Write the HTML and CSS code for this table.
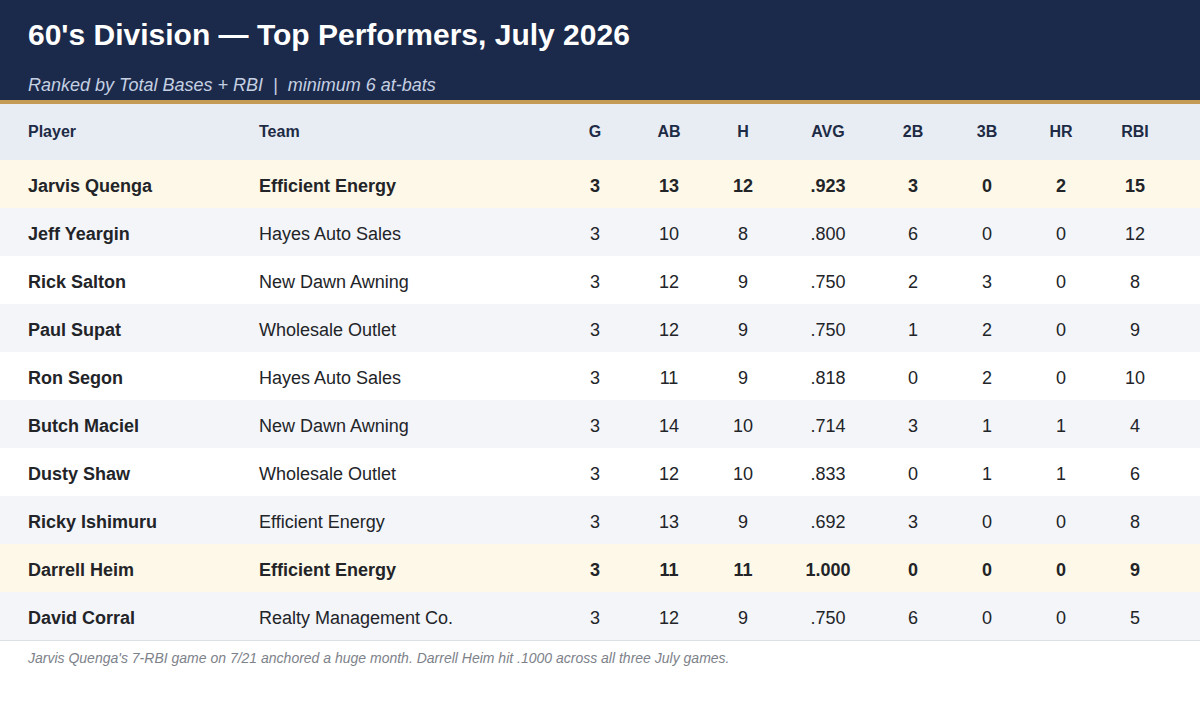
FILE: index.html
```html
<!DOCTYPE html>
<html>
<head>
<meta charset="utf-8">
<link rel="stylesheet" href="styles.css">
</head>
<body>
<header class="banner">
  <h1 class="title">60's Division — Top Performers, July 2026</h1>
  <p class="subtitle">Ranked by Total Bases + RBI &nbsp;|&nbsp; minimum 6 at-bats</p>
</header>
<div class="table">
  <div class="row head">
    <div class="c name">Player</div><div class="c team">Team</div>
    <div class="c num">G</div><div class="c num">AB</div><div class="c num">H</div><div class="c num">AVG</div>
    <div class="c num">2B</div><div class="c num">3B</div><div class="c num">HR</div><div class="c num">RBI</div>
  </div>
  <div class="row hl">
    <div class="c name">Jarvis Quenga</div><div class="c team">Efficient Energy</div>
    <div class="c num">3</div><div class="c num">13</div><div class="c num">12</div><div class="c num">.923</div>
    <div class="c num">3</div><div class="c num">0</div><div class="c num">2</div><div class="c num">15</div>
  </div>
  <div class="row alt">
    <div class="c name">Jeff Yeargin</div><div class="c team">Hayes Auto Sales</div>
    <div class="c num">3</div><div class="c num">10</div><div class="c num">8</div><div class="c num">.800</div>
    <div class="c num">6</div><div class="c num">0</div><div class="c num">0</div><div class="c num">12</div>
  </div>
  <div class="row">
    <div class="c name">Rick Salton</div><div class="c team">New Dawn Awning</div>
    <div class="c num">3</div><div class="c num">12</div><div class="c num">9</div><div class="c num">.750</div>
    <div class="c num">2</div><div class="c num">3</div><div class="c num">0</div><div class="c num">8</div>
  </div>
  <div class="row alt">
    <div class="c name">Paul Supat</div><div class="c team">Wholesale Outlet</div>
    <div class="c num">3</div><div class="c num">12</div><div class="c num">9</div><div class="c num">.750</div>
    <div class="c num">1</div><div class="c num">2</div><div class="c num">0</div><div class="c num">9</div>
  </div>
  <div class="row">
    <div class="c name">Ron Segon</div><div class="c team">Hayes Auto Sales</div>
    <div class="c num">3</div><div class="c num">11</div><div class="c num">9</div><div class="c num">.818</div>
    <div class="c num">0</div><div class="c num">2</div><div class="c num">0</div><div class="c num">10</div>
  </div>
  <div class="row alt">
    <div class="c name">Butch Maciel</div><div class="c team">New Dawn Awning</div>
    <div class="c num">3</div><div class="c num">14</div><div class="c num">10</div><div class="c num">.714</div>
    <div class="c num">3</div><div class="c num">1</div><div class="c num">1</div><div class="c num">4</div>
  </div>
  <div class="row">
    <div class="c name">Dusty Shaw</div><div class="c team">Wholesale Outlet</div>
    <div class="c num">3</div><div class="c num">12</div><div class="c num">10</div><div class="c num">.833</div>
    <div class="c num">0</div><div class="c num">1</div><div class="c num">1</div><div class="c num">6</div>
  </div>
  <div class="row alt">
    <div class="c name">Ricky Ishimuru</div><div class="c team">Efficient Energy</div>
    <div class="c num">3</div><div class="c num">13</div><div class="c num">9</div><div class="c num">.692</div>
    <div class="c num">3</div><div class="c num">0</div><div class="c num">0</div><div class="c num">8</div>
  </div>
  <div class="row hl">
    <div class="c name">Darrell Heim</div><div class="c team">Efficient Energy</div>
    <div class="c num">3</div><div class="c num">11</div><div class="c num">11</div><div class="c num">1.000</div>
    <div class="c num">0</div><div class="c num">0</div><div class="c num">0</div><div class="c num">9</div>
  </div>
  <div class="row alt last">
    <div class="c name">David Corral</div><div class="c team">Realty Management Co.</div>
    <div class="c num">3</div><div class="c num">12</div><div class="c num">9</div><div class="c num">.750</div>
    <div class="c num">6</div><div class="c num">0</div><div class="c num">0</div><div class="c num">5</div>
  </div>
</div>
<p class="note">Jarvis Quenga's 7-RBI game on 7/21 anchored a huge month. Darrell Heim hit .1000 across all three July games.</p>
</body>
</html>
```

FILE: styles.css
```css
* { box-sizing: border-box; }
html, body { margin: 0; padding: 0; }
body {
  width: 1200px;
  height: 708px;
  background: #ffffff;
  font-family: "Liberation Sans", Arial, sans-serif;
  color: #222428;
  overflow: hidden;
}
.banner {
  background: #1b2a4a;
  border-bottom: 4px solid #c49b55;
  padding: 17px 28px 0;
  height: 104px;
}
.title {
  margin: 0;
  font-size: 30px;
  line-height: 36px;
  font-weight: bold;
  color: #ffffff;
}
.subtitle {
  margin: 20px 0 0;
  font-size: 18px;
  line-height: 24px;
  font-style: italic;
  color: #c5d0e3;
}
.table { display: flex; flex-direction: column; }
.row {
  display: grid;
  grid-template-columns: 231px 327px 74px 74px 74px 96px 74px 74px 74px 74px;
  padding: 4px 28px 0 0;
  height: 48px;
  align-items: center;
  font-size: 18px;
  background: #ffffff;
}
.row.alt { background: #f3f5f9; }
.row.hl { background: #fdf8e7; font-weight: bold; }
.row.last { border-bottom: 1px solid #dcdfe4; height: 49px; }
.row.head {
  padding-top: 0;
  height: 56px;
  background: #e8edf4;
  font-size: 16px;
  font-weight: bold;
  color: #1e2b45;
}
.c { white-space: nowrap; }
.name { padding-left: 28px; font-weight: bold; }
.team { padding-left: 28px; }
.num { text-align: center; }
.note {
  margin: 0;
  padding: 9px 28px 0;
  font-size: 14px;
  font-style: italic;
  color: #7d828a;
}
```
